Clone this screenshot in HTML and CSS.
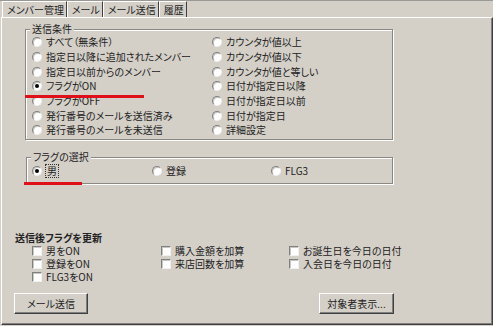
FILE: index.html
```html
<!DOCTYPE html>
<html lang="ja">
<head>
<meta charset="utf-8">
<link rel="stylesheet" href="styles.css">
</head>
<body>
<div class="window">
  <div class="tabs">
    <div class="tab">メンバー管理</div>
    <div class="tab">メール</div>
    <div class="tab active">メール送信</div>
    <div class="tab">履歴</div>
  </div>
  <div class="panel">
    <fieldset class="group cond">
      <legend>送信条件</legend>
      <div class="cond-grid">
        <label class="opt"><span class="radio"></span>すべて（無条件）</label>
        <label class="opt"><span class="radio"></span>指定日以降に追加されたメンバー</label>
        <label class="opt"><span class="radio"></span>指定日以前からのメンバー</label>
        <label class="opt"><span class="radio on"></span>フラグがON</label>
        <label class="opt"><span class="radio"></span>フラグがOFF</label>
        <label class="opt"><span class="radio"></span>発行番号のメールを送信済み</label>
        <label class="opt"><span class="radio"></span>発行番号のメールを未送信</label>
        <label class="opt"><span class="radio"></span>カウンタが値以上</label>
        <label class="opt"><span class="radio"></span>カウンタが値以下</label>
        <label class="opt"><span class="radio"></span>カウンタが値と等しい</label>
        <label class="opt"><span class="radio"></span>日付が指定日以降</label>
        <label class="opt"><span class="radio"></span>日付が指定日以前</label>
        <label class="opt"><span class="radio"></span>日付が指定日</label>
        <label class="opt"><span class="radio"></span>詳細設定</label>
      </div>
    </fieldset>

    <fieldset class="group flag">
      <legend>フラグの選択</legend>
      <div class="flag-row">
        <label class="opt"><span class="radio on"></span><span class="focus">男</span></label>
        <label class="opt"><span class="radio"></span>登録</label>
        <label class="opt"><span class="radio"></span>FLG3</label>
      </div>
    </fieldset>

    <div class="update">
      <div class="update-title">送信後フラグを更新</div>
      <div class="check-grid">
        <label class="opt"><span class="check"></span>男をON</label>
        <label class="opt"><span class="check"></span>購入金額を加算</label>
        <label class="opt"><span class="check"></span>お誕生日を今日の日付</label>
        <label class="opt"><span class="check"></span>登録をON</label>
        <label class="opt"><span class="check"></span>来店回数を加算</label>
        <label class="opt"><span class="check"></span>入会日を今日の日付</label>
        <label class="opt"><span class="check"></span>FLG3をON</label>
      </div>
    </div>

    <div class="buttons">
      <button class="btn send">メール送信</button>
      <button class="btn show">対象者表示...</button>
    </div>

    <span class="mark mark1"></span>
    <span class="mark mark2"></span>
  </div>
</div>
</body>
</html>
```

FILE: styles.css
```css
* { box-sizing: border-box; }
html, body {
  margin: 0;
  padding: 0;
  background: #d4d0c8;
}
body {
  font-family: "Noto Sans CJK JP", "Noto Sans", sans-serif;
  font-size: 10px;
  line-height: 12px;
  color: #222;
  font-feature-settings: "palt";
}
.window {
  width: 493px;
  height: 326px;
  border-top: 1px solid #9a9893;
  overflow: hidden;
}
.tabs {
  display: flex;
  height: 16px;
  padding-left: 2px;
}
.tab {
  height: 16px;
  padding: 2px 2px 0 4px;
  border-top: 1px solid #fff;
  border-left: 1px solid #fff;
  border-right: 1px solid #404040;
  white-space: nowrap;
}
.tab.active {
  padding: 2px 2px 0 4px;
}

.panel {
  position: relative;
  margin-left: 1px;
  width: 492px;
  height: 308px;
  border-top: 1px solid #fff;
  border-left: 1px solid #fff;
  border-right: 1px solid #404040;
  border-bottom: 1px solid #404040;
  box-shadow: inset -1px -1px 0 #808080;
  padding: 5px 0 0 23px;
}

.group {
  margin: 0;
  padding: 0;
  border: 1px solid #8a8883;
  box-shadow: 1px 1px 0 #fff, inset 1px 1px 0 #fff;
  min-width: 0;
}
.group legend {
  padding: 0 2px;
  margin-left: 4px;
  background: #d4d0c8;
  line-height: 12px;
}
.cond {
  width: 368px;
  height: 117px;
}
.cond-grid {
  display: grid;
  grid-auto-flow: column;
  grid-template-rows: repeat(7, 14.67px);
  grid-template-columns: 180px 1fr;
  padding-left: 6px;
}
.opt {
  display: flex;
  align-items: center;
  white-space: nowrap;
}
.radio {
  width: 10px;
  height: 10px;
  border-radius: 50%;
  background: #fff;
  border: 1px solid;
  border-color: #808080 #f0f0f0 #f0f0f0 #808080;
  box-shadow: inset 1px 1px 0 #c8c6c0;
  margin-right: 4px;
  flex: none;
  position: relative;
}
.radio.on::after {
  content: "";
  position: absolute;
  left: 2px;
  top: 2px;
  width: 4px;
  height: 4px;
  border-radius: 50%;
  background: #000;
}

.flag {
  margin-top: 11px;
  width: 367px;
  height: 33px;
  margin-left: 1px;
}
.flag-row {
  display: grid;
  grid-template-columns: 120px 119px 1fr;
  padding-left: 5px;
  height: 16px;
  align-items: center;
}
.focus {
  outline: 1px dotted #333;
  outline-offset: 0;
  padding: 0 1px;
  line-height: 12px;
}

.update {
  margin: 48px 0 0 -10px;
}
.update-title {
  font-weight: bold;
  height: 12px;
}
.check-grid {
  display: grid;
  grid-template-columns: 129px 128px 1fr;
  grid-auto-rows: 13px;
  padding-left: 17px;
}
.check {
  width: 10px;
  height: 10px;
  background: #fff;
  border: 1px solid;
  border-color: #808080 #f0f0f0 #f0f0f0 #808080;
  box-shadow: inset 1px 1px 0 #c8c6c0;
  margin-right: 4px;
  flex: none;
}

.buttons {
  display: flex;
  justify-content: space-between;
  margin: 10px 0 0 -11px;
  width: 380px;
}
.btn {
  font: inherit;
  color: #222;
  background: #d4d0c8;
  height: 21px;
  border: 1px solid;
  border-color: #fff #404040 #404040 #fff;
  box-shadow: inset -1px -1px 0 #808080;
  padding: 0;
  text-align: center;
}
.send { width: 74px; }
.show { width: 75px; }

.mark {
  position: absolute;
  height: 3px;
  background: #e0101a;
}
.mark1 { left: 23px; top: 77px; width: 119px; }
.mark2 { left: 22px; top: 164px; width: 58px; }
```
